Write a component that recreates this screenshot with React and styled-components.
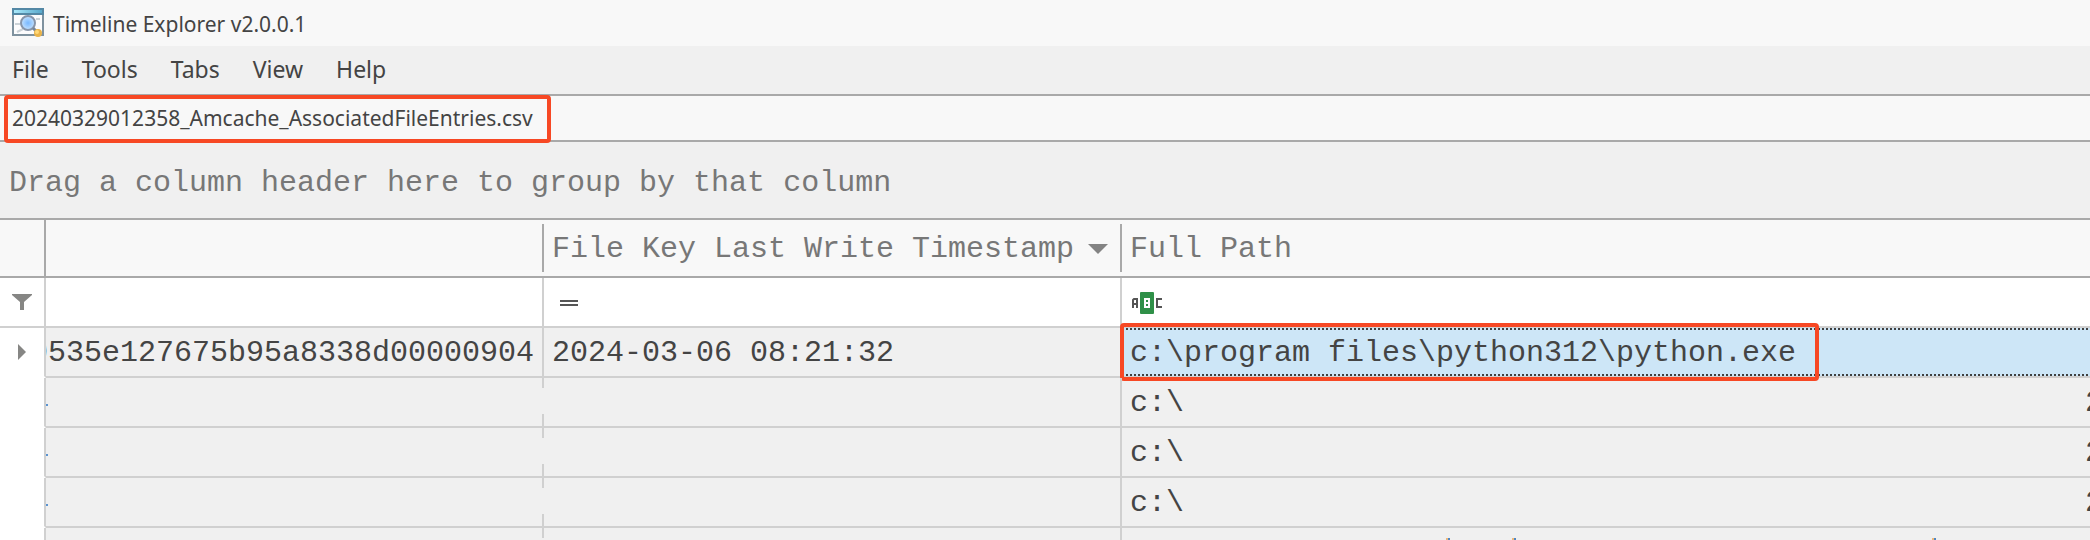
import React from "react";
import styled, { createGlobalStyle } from "styled-components";

const GlobalStyle = createGlobalStyle`
  *, *::before, *::after { box-sizing: border-box; }
  html, body { margin: 0; background: #f0f0f0; overflow: hidden; }
  body { font-family: "Noto Sans", sans-serif; color: #444; }
`;

const ui = { mark: "#f74824", line: "#a9a9a9", soft: "#d0d0d0", bar: "#f8f8f8", panel: "#f0f0f0" };
const columns = "46px 498px 578px minmax(0, 1fr)";

const Window = styled.main`
  height: 100vh;
  overflow: hidden;
`;

const TitleBar = styled.header`
  display: flex;
  align-items: center;
  gap: 8px;
  height: 46px;
  padding: 0 12px;
  background: ${ui.bar};
`;

const Title = styled.h1`
  margin: 0;
  padding-top: 2px;
  font-size: 21px;
  font-weight: 400;
  line-height: 30px;
`;

const MenuBar = styled.nav`
  display: flex;
  gap: 33px;
  height: 48px;
  padding: 0 12px;
  background: ${ui.panel};
`;

const MenuButton = styled.button`
  padding: 0 0 2px;
  border: 0;
  background: none;
  color: inherit;
  font-family: inherit;
  font-size: 23px;
  line-height: 46px;
`;

const TabStrip = styled.div`
  display: flex;
  height: 48px;
  padding-left: 4px;
  border-top: 2px solid ${ui.line};
  border-bottom: 2px solid ${ui.line};
  background: ${ui.bar};
`;

const FileTab = styled.button`
  width: 547px;
  height: 48px;
  margin-top: -1px;
  padding: 0 4px 2px;
  border: 4px solid ${ui.mark};
  border-radius: 4px;
  background: ${ui.bar};
  color: inherit;
  font-family: inherit;
  font-size: 21px;
  line-height: 38px;
  text-align: left;
  white-space: nowrap;
`;

const GroupPanel = styled.div`
  height: 78px;
  padding: 0 9px;
  border-bottom: 2px solid ${ui.line};
  color: #777;
  font-family: "Liberation Mono", monospace;
  font-size: 30px;
  line-height: 82px;
`;

const Grid = styled.table`
  display: block;
  font-family: "Liberation Mono", monospace;
  font-size: 30px;
  line-height: 46px;
  white-space: pre;
`;

const Section = styled.thead`
  display: block;
`;

const HeaderRow = styled.tr`
  display: grid;
  grid-template-columns: ${columns};
  height: 58px;
  border-bottom: 2px solid ${ui.line};
  background: ${ui.bar};
  color: #777;
`;

const HeaderCell = styled.th`
  display: flex;
  align-items: center;
  gap: 14px;
  margin: ${(p) => (p.$full ? "0" : "4px 0")};
  padding: 2px 0 0 8px;
  border-right: ${(p) => (p.$last ? "0" : `2px solid ${ui.line}`)};
  font-weight: 400;
`;

const Row = styled.tr`
  display: grid;
  grid-template-columns: ${columns};
  height: 50px;
  background: ${(p) => p.$fill || ui.panel};
`;

const Cell = styled.td`
  position: relative;
  display: flex;
  align-items: center;
  justify-content: ${(p) => (p.$end ? "flex-end" : "flex-start")};
  min-width: 0;
  overflow: hidden;
  padding: ${(p) => (p.$end ? "2px 8px 0 0" : "2px 0 0 8px")};
  border-right: ${(p) => (p.$last || p.$broken ? "0" : `2px solid ${ui.soft}`)};
  border-bottom: 2px solid ${ui.soft};

  ${(p) => p.$broken && `
    &::after {
      content: "";
      position: absolute;
      inset: 0 0 0 auto;
      width: 2px;
      background: linear-gradient(${ui.soft} 10px, transparent 10px 36px, ${ui.soft} 36px);
    }
  `}
`;

const Indicator = styled.td`
  display: flex;
  align-items: center;
  justify-content: center;
  border-right: 2px solid ${ui.soft};
  border-bottom: 2px solid ${(p) => (p.$ruled ? ui.soft : "#fff")};
  background: #fff;
`;

const dots = "repeating-linear-gradient(90deg, #404040 0 2px, transparent 2px 4px)";

const SelectedCell = styled(Cell)`
  overflow: visible;
  background: ${dots} top / 100% 2px no-repeat, ${dots} bottom / 100% 2px no-repeat, #cde6f7;
  background-clip: padding-box;
  background-origin: padding-box;
`;

/* Only the tips of the tallest strokes of this row reach into the window. */
const tip = "linear-gradient(90deg, #efb878 2px, #4f86c4 2px)";

const PartialCell = styled(Cell)`
  background: ${tip} 324px 10px / 4px 2px no-repeat, ${tip} 390px 10px / 4px 2px no-repeat,
    ${tip} 810px 10px / 4px 2px no-repeat;
`;

const Mark = styled.span`
  position: absolute;
  top: -5px;
  left: -2px;
  width: 699px;
  height: 58px;
  border: 4px solid ${ui.mark};
  border-radius: 4px;
`;

const Clipped = styled.span`
  margin-left: auto;
  width: 5px;
  overflow: hidden;
`;

const Dot = styled.span`
  width: 2px;
  height: 2px;
  margin: 4px 0 0 -8px;
  background: #5b93d0;
`;

const AppIcon = () => (
  <svg width="33" height="32" viewBox="0 0 33 32" aria-hidden="true">
    <defs>
      <linearGradient id="cap" x1="0" x2="1">
        <stop offset="0" stopColor="#a8e8fa" />
        <stop offset="1" stopColor="#5aa9cc" />
      </linearGradient>
      <radialGradient id="lens">
        <stop offset="0" stopColor="#78b8ff" />
        <stop offset="1" stopColor="#c4e2ff" />
      </radialGradient>
    </defs>
    <rect x="1" y="2" width="30" height="26" fill="#fcfcfd" stroke="#7f929f" strokeWidth="2" />
    <path d="M0 1h32v7H0z" fill="#5488a5" />
    <path d="M2 3h28v3H2z" fill="url(#cap)" />
    <path d="M3 17h6M24 12h4M5 25l6-3" stroke="#ccd3d8" strokeWidth="2" />
    <circle cx="16" cy="16" r="7" fill="url(#lens)" stroke="#8795aa" strokeWidth="2" />
    <path d="M21 21l3 3" stroke="#77879a" strokeWidth="3" />
    <circle cx="26" cy="26" r="4" fill="#e9b34a" />
    <circle cx="25" cy="25" r="2" fill="#ffd978" />
  </svg>
);

const SortIcon = () => (
  <svg width="20" height="10" viewBox="0 0 20 10" aria-hidden="true">
    <path d="M0 0h20L10 10z" fill="#838383" />
  </svg>
);

const FunnelIcon = () => (
  <svg width="20" height="16" viewBox="0 0 20 16" aria-hidden="true">
    <path d="M0 0h20v1l-8 7v8H8V8L0 1z" fill="#868684" />
  </svg>
);

const ArrowIcon = () => (
  <svg width="8" height="16" viewBox="0 0 8 16" aria-hidden="true">
    <path d="M0 0l8 8-8 8z" fill="#868684" />
  </svg>
);

const EqualsIcon = () => (
  <svg width="34" height="22" viewBox="0 0 34 22" aria-label="Equals">
    <path d="M8 8h18v2H8zM8 12h18v2H8z" fill="#555" />
  </svg>
);

const ContainsIcon = () => (
  <svg width="33" height="22" viewBox="0 0 33 22" aria-label="Contains">
    <path d="M3 16V8l1-1h3v9M3 12h4" fill="none" stroke="#555" strokeWidth="2" />
    <rect x="10" y="0" width="14" height="22" rx="1" fill="#2f9048" />
    <path d="M14 6h6v10h-6zM16 8v2h2V8zM16 12v2h2v-2z" fill="#fff" fillRule="evenodd" />
    <path d="M32 7h-5v8h5" fill="none" stroke="#555" strokeWidth="2" />
  </svg>
);

const menus = ["File", "Tools", "Tabs", "View", "Help"];
const entries = ["c:\\", "c:\\", "c:\\"];

export default function App() {
  return (
    <Window>
      <GlobalStyle />
      <TitleBar>
        <AppIcon />
        <Title>Timeline Explorer v2.0.0.1</Title>
      </TitleBar>
      <MenuBar>
        {menus.map((name) => <MenuButton key={name}>{name}</MenuButton>)}
      </MenuBar>
      <TabStrip>
        <FileTab>20240329012358_Amcache_AssociatedFileEntries.csv</FileTab>
      </TabStrip>
      <GroupPanel>Drag a column header here to group by that column</GroupPanel>
      <Grid>
        <Section>
          <HeaderRow>
            <HeaderCell $full />
            <HeaderCell />
            <HeaderCell>File Key Last Write Timestamp<SortIcon /></HeaderCell>
            <HeaderCell $last>Full Path</HeaderCell>
          </HeaderRow>
        </Section>
        <Section as="tbody">
          <Row $fill="#fff">
            <Indicator $ruled><FunnelIcon /></Indicator>
            <Cell />
            <Cell><EqualsIcon /></Cell>
            <Cell $last><ContainsIcon /></Cell>
          </Row>
          <Row>
            <Indicator><ArrowIcon /></Indicator>
            <Cell $end>0535e127675b95a8338d00000904</Cell>
            <Cell>2024-03-06 08:21:32</Cell>
            <SelectedCell $last>c:\program files\python312\python.exe<Mark /></SelectedCell>
          </Row>
          {entries.map((path, i) => (
            <Row key={i}>
              <Indicator />
              <Cell $broken><Dot /></Cell>
              <Cell />
              <Cell $last>{path}<Clipped>2</Clipped></Cell>
            </Row>
          ))}
          <Row>
            <Indicator />
            <Cell $broken />
            <Cell />
            <PartialCell $last />
          </Row>
        </Section>
      </Grid>
    </Window>
  );
}
